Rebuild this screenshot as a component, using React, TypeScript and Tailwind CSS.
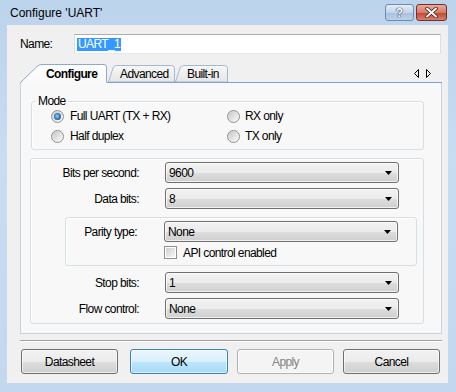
import React from "react";

const comboBg =
  "bg-[linear-gradient(to_bottom,#f2f2f2_0%,#ebebeb_50%,#dddddd_51%,#cfcfcf_100%)]";

function Combo({ value }: { value: string }) {
  return (
    <div
      className={`relative flex h-[21px] w-[234px] items-center rounded-[3px] border border-[#707070] ${comboBg} pl-[3px] shadow-[inset_0_0_0_1px_rgba(255,255,255,0.7)]`}
    >
      <span>{value}</span>
      <svg
        className="absolute right-[6px] top-[8px]"
        width="7"
        height="4"
        viewBox="0 0 7 4"
      >
        <path d="M0 0H7L3.5 4Z" fill="#000" />
      </svg>
    </div>
  );
}

function Radio({ checked }: { checked?: boolean }) {
  return (
    <span className="relative flex h-[13px] w-[13px] shrink-0 items-center justify-center rounded-full border border-[#8e8f8f] bg-[linear-gradient(135deg,#d2d2d2,#fbfbfb)]">
      <span className="h-[9px] w-[9px] rounded-full bg-[linear-gradient(135deg,#c9c9c9,#f8f8f8)]" />
      {checked && (
        <span className="absolute left-[2px] top-[2px] h-[7px] w-[7px] rounded-full bg-[radial-gradient(circle_at_45%_45%,#9ad6f8_0%,#2a74b6_55%,#0f3e72_100%)]" />
      )}
    </span>
  );
}

function Checkbox() {
  return (
    <span className="flex h-[13px] w-[13px] shrink-0 items-center justify-center border border-[#8e8f8f] bg-white">
      <span className="h-[9px] w-[9px] bg-[linear-gradient(135deg,#cfcfcf,#f7f7f7)]" />
    </span>
  );
}

function Row({ label, value }: { label: string; value: string }) {
  return (
    <div className="flex items-center">
      <div className="w-[108px] text-right">{label}</div>
      <div className="ml-[26px]">
        <Combo value={value} />
      </div>
    </div>
  );
}

function Button({
  children,
  variant,
  w,
}: {
  children: React.ReactNode;
  variant?: "default" | "disabled";
  w: string;
}) {
  let cls =
    "border-[#707070] bg-[linear-gradient(to_bottom,#f2f2f2_0%,#ebebeb_50%,#dddddd_51%,#cfcfcf_100%)] text-black";
  if (variant === "default")
    cls =
      "border-[#3c7fb1] bg-[linear-gradient(to_bottom,#eaf6fd_0%,#d9f0fc_50%,#bee6fd_51%,#a7d9f5_100%)] text-black";
  if (variant === "disabled")
    cls = "border-[#adb2b5] bg-[#f4f4f4] text-[#838383]";
  return (
    <div
      className={`flex h-[25px] ${w} items-center justify-center rounded-[3px] border ${cls} shadow-[inset_0_0_0_1px_rgba(255,255,255,0.6)]`}
    >
      {children}
    </div>
  );
}

export default function App() {
  return (
    <div className="h-[392px] w-[456px] overflow-hidden bg-[linear-gradient(to_bottom,#bcd3ec,#c8dcf2_40%,#c3d8ef)] font-['Liberation_Sans',Arial,sans-serif] text-black">
      {/* Title bar */}
      <div className="flex h-[25px] items-center pl-[10px] pr-[9px]">
        <span className="text-[12px]">Configure 'UART'</span>
        <div className="ml-auto flex items-center gap-[2px] self-start pt-[4px]">
          <div className="flex h-[17px] w-[29px] items-center justify-center rounded-[3px] border border-[#6f8bb0] bg-[linear-gradient(to_bottom,#e3ecf6,#c4d5ea_50%,#a9c0de_51%,#bcd1ea)]">
            <span className="text-[12px] font-bold leading-none text-white [text-shadow:0_0_1px_#2c3e57,0_0_1px_#2c3e57,0_0_1px_#2c3e57]">
              ?
            </span>
          </div>
          <div className="flex h-[17px] w-[31px] items-center justify-center rounded-[3px] border border-[#7a2e23] bg-[linear-gradient(to_bottom,#e9a99b,#d47c68_50%,#c2452d_51%,#d5826c)]">
            <svg width="13" height="11" viewBox="0 0 13 11">
              <path
                d="M2 1.5L11 9.5M11 1.5L2 9.5"
                stroke="#4a1a12"
                strokeWidth="3.6"
                strokeLinecap="round"
              />
              <path
                d="M2 1.5L11 9.5M11 1.5L2 9.5"
                stroke="#ffffff"
                strokeWidth="2"
                strokeLinecap="round"
              />
            </svg>
          </div>
        </div>
      </div>

      {/* Client area */}
      <div className="ml-[7px] flex h-[358px] w-[441px] flex-col bg-[#f0f0f0] text-[12px] tracking-[-0.6px]">
        {/* Name row */}
        <div className="ml-[13px] mt-[9px] flex items-center">
          <span className="w-[54px]">Name:</span>
          <div className="flex h-[20px] w-[367px] items-center border border-[#abadb3] border-x-[#dbdfe6] border-b-[#e3e9ef] bg-white pl-[2px]">
            <span className="bg-[#3399ff] px-[1px] leading-[13px] text-white">
              UART_1
            </span>
          </div>
        </div>

        {/* Tab strip */}
        <div className="ml-[13px] mt-[9px] flex h-[20px] w-[422px] items-end border-b border-[#7da2ce]">
          <div className="relative -mb-px flex h-[20px] w-[88px] items-center pl-[26px] pt-[2px] font-bold">
            <svg
              className="absolute inset-0"
              width="88"
              height="20"
              viewBox="0 0 88 20"
            >
              <defs>
                <linearGradient id="ta" x1="0" y1="0" x2="0" y2="1">
                  <stop offset="0" stopColor="#ffffff" />
                  <stop offset="1" stopColor="#f9f9f9" />
                </linearGradient>
              </defs>
              <path
                d="M0.5 20 L17 3.5 Q19 1.5 22 1.5 L84 1.5 Q86.5 1.5 86.5 4 L86.5 20 Z"
                fill="url(#ta)"
              />
              <path
                d="M0.5 19.5 L17 3.5 Q19 1.5 22 1.5 L84 1.5 Q86.5 1.5 86.5 4 L86.5 19"
                fill="none"
                stroke="#8ea9ca"
              />
            </svg>
            <span className="relative">Configure</span>
          </div>
          <div className="relative flex h-[17px] w-[67px] items-center pl-[12px] pt-[1px]">
            <svg
              className="absolute inset-0"
              width="67"
              height="17"
              viewBox="0 0 67 17"
            >
              <defs>
                <linearGradient id="tb" x1="0" y1="0" x2="0" y2="1">
                  <stop offset="0" stopColor="#f7f7f7" />
                  <stop offset="1" stopColor="#e6e6e6" />
                </linearGradient>
              </defs>
              <path
                d="M0.5 17 L5 3 Q6 0.5 8.5 0.5 L63.5 0.5 Q66.5 0.5 66.5 3.5 L66.5 17 Z"
                fill="url(#tb)"
                stroke="#a5b8cf"
              />
            </svg>
            <span className="relative">Advanced</span>
          </div>
          <div className="relative flex h-[17px] w-[53px] items-center pl-[12px] pt-[1px]">
            <svg
              className="absolute inset-0"
              width="53"
              height="17"
              viewBox="0 0 53 17"
            >
              <path
                d="M0.5 17 L5 3 Q6 0.5 8.5 0.5 L49.5 0.5 Q52.5 0.5 52.5 3.5 L52.5 17 Z"
                fill="url(#tb)"
                stroke="#a5b8cf"
              />
            </svg>
            <span className="relative">Built-in</span>
          </div>
          <div className="mb-[4px] ml-auto mr-[11px] flex gap-[7px]">
            <svg width="5" height="9" viewBox="0 0 5 9">
              <path d="M4.5 0.5 L0.5 4.5 L4.5 8.5 Z" fill="none" stroke="#000" />
            </svg>
            <svg width="5" height="9" viewBox="0 0 5 9">
              <path d="M0.5 0.5 L4.5 4.5 L0.5 8.5 Z" fill="none" stroke="#000" />
            </svg>
          </div>
        </div>

        {/* Tab page */}
        <div className="ml-[13px] flex w-[422px] flex-col border-x border-b border-x-[#c9d3de] border-b-[#c9d3de] bg-[#f8f8f8] pb-[9px]">
          <fieldset className="ml-[10px] mt-[12px] w-[393px] rounded-[3px] border border-[#d5dfe5] pb-[5px] shadow-[inset_1px_1px_0_#ffffff]">
            <legend className="ml-[4px] px-[2px] leading-[13px]">Mode</legend>
            <div className="grid grid-cols-[176px_1fr] gap-y-[4px] pl-[19px]">
              <div className="flex h-[16px] items-center gap-[6px]">
                <Radio checked />
                <span>Full UART (TX + RX)</span>
              </div>
              <div className="flex h-[16px] items-center gap-[5px]">
                <Radio />
                <span>RX only</span>
              </div>
              <div className="flex h-[16px] items-center gap-[6px]">
                <Radio />
                <span>Half duplex</span>
              </div>
              <div className="flex h-[16px] items-center gap-[5px]">
                <Radio />
                <span>TX only</span>
              </div>
            </div>
          </fieldset>

          <div className="ml-[9px] mt-[8px] flex w-[394px] flex-col rounded-[3px] border border-[#d5dfe5] pb-[4px] pt-[3px] shadow-[inset_1px_1px_0_#ffffff]">
            <Row label="Bits per second:" value="9600" />
            <div className="mt-[5px]">
              <Row label="Data bits:" value="8" />
            </div>
            <div className="ml-[34px] mt-[8px] flex w-[352px] flex-col rounded-[3px] border border-[#d5dfe5] pb-[6px] pt-[3px] shadow-[inset_1px_1px_0_#ffffff]">
              <div className="flex items-center">
                <div className="w-[71px] text-right">Parity type:</div>
                <div className="ml-[27px]">
                  <Combo value="None" />
                </div>
              </div>
              <div className="ml-[98px] mt-[4px] flex h-[13px] items-center gap-[6px]">
                <Checkbox />
                <span>API control enabled</span>
              </div>
            </div>
            <div className="mt-[6px]">
              <Row label="Stop bits:" value="1" />
            </div>
            <div className="mt-[5px]">
              <Row label="Flow control:" value="None" />
            </div>
          </div>
        </div>

        {/* Separator */}
        <div className="ml-[13px] mt-[6px] w-[422px] border-t border-[#a0a0a0] border-b border-b-white" />

        {/* Buttons */}
        <div className="ml-[14px] mt-[7px] flex">
          <Button w="w-[97px]">Datasheet</Button>
          <div className="ml-[12px]">
            <Button w="w-[98px]" variant="default">
              OK
            </Button>
          </div>
          <div className="ml-[9px]">
            <Button w="w-[97px]" variant="disabled">
              Apply
            </Button>
          </div>
          <div className="ml-[9px]">
            <Button w="w-[97px]">Cancel</Button>
          </div>
        </div>
      </div>
    </div>
  );
}
